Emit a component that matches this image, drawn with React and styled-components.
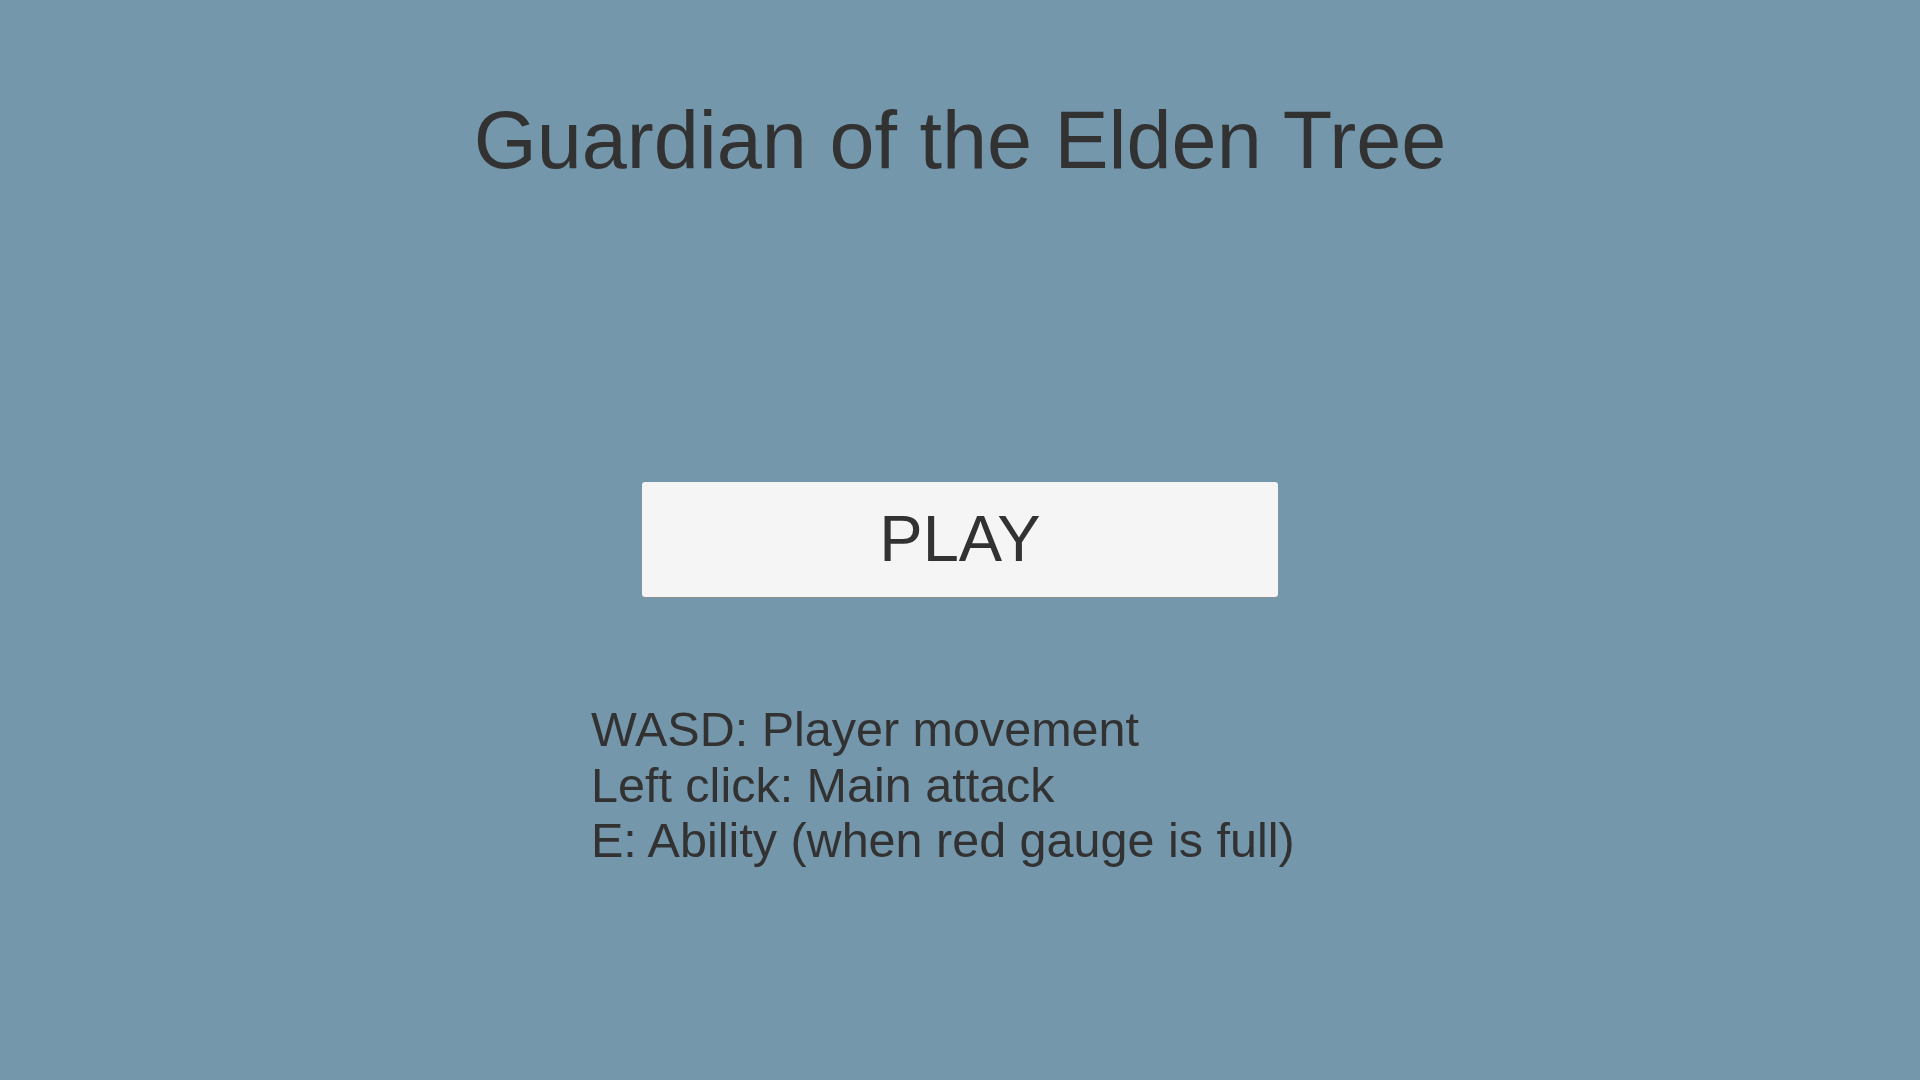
import React from "react";
import styled, { createGlobalStyle } from "styled-components";

const Global = createGlobalStyle`
  html, body {
    margin: 0;
    padding: 0;
    background: #7597ac;
  }
  body {
    font-family: "Liberation Sans", Arial, sans-serif;
    color: #323232;
  }
`;

const Screen = styled.main`
  box-sizing: border-box;
  width: 100%;
  height: 100vh;
  overflow: hidden;
  display: flex;
  flex-direction: column;
  align-items: center;
  padding-top: 94px;
  background: #7597ac;
`;

const Title = styled.h1`
  margin: 0;
  font-family: "Liberation Sans", Arial, sans-serif;
  font-weight: 400;
  font-size: 81px;
  line-height: 92px;
  color: #323232;
  white-space: nowrap;
`;

const PlayButton = styled.button`
  margin-top: 296px;
  width: 636px;
  height: 115px;
  display: flex;
  align-items: center;
  justify-content: center;
  padding: 0;
  border: none;
  border-radius: 3px;
  background: #f5f5f5;
  box-shadow: 0 1px 0 #8c8f92;
  font-family: "Liberation Sans", Arial, sans-serif;
  font-size: 65px;
  line-height: 1.15;
  color: #323232;
  cursor: pointer;
`;

const Instructions = styled.div`
  margin-top: 105px;
  width: 738px;
  display: flex;
  flex-direction: column;
  text-align: left;
`;

const Line = styled.p`
  margin: 0;
  font-family: "Liberation Sans", Arial, sans-serif;
  font-size: 48.5px;
  line-height: 55.5px;
  color: #323232;
  white-space: nowrap;
`;

const lines = [
  "WASD: Player movement",
  "Left click: Main attack",
  "E: Ability (when red gauge is full)",
];

export default function App() {
  return (
    <>
      <Global />
      <Screen>
        <Title>Guardian of the Elden Tree</Title>
        <PlayButton>PLAY</PlayButton>
        <Instructions>
          {lines.map((l) => (
            <Line key={l}>{l}</Line>
          ))}
        </Instructions>
      </Screen>
    </>
  );
}
